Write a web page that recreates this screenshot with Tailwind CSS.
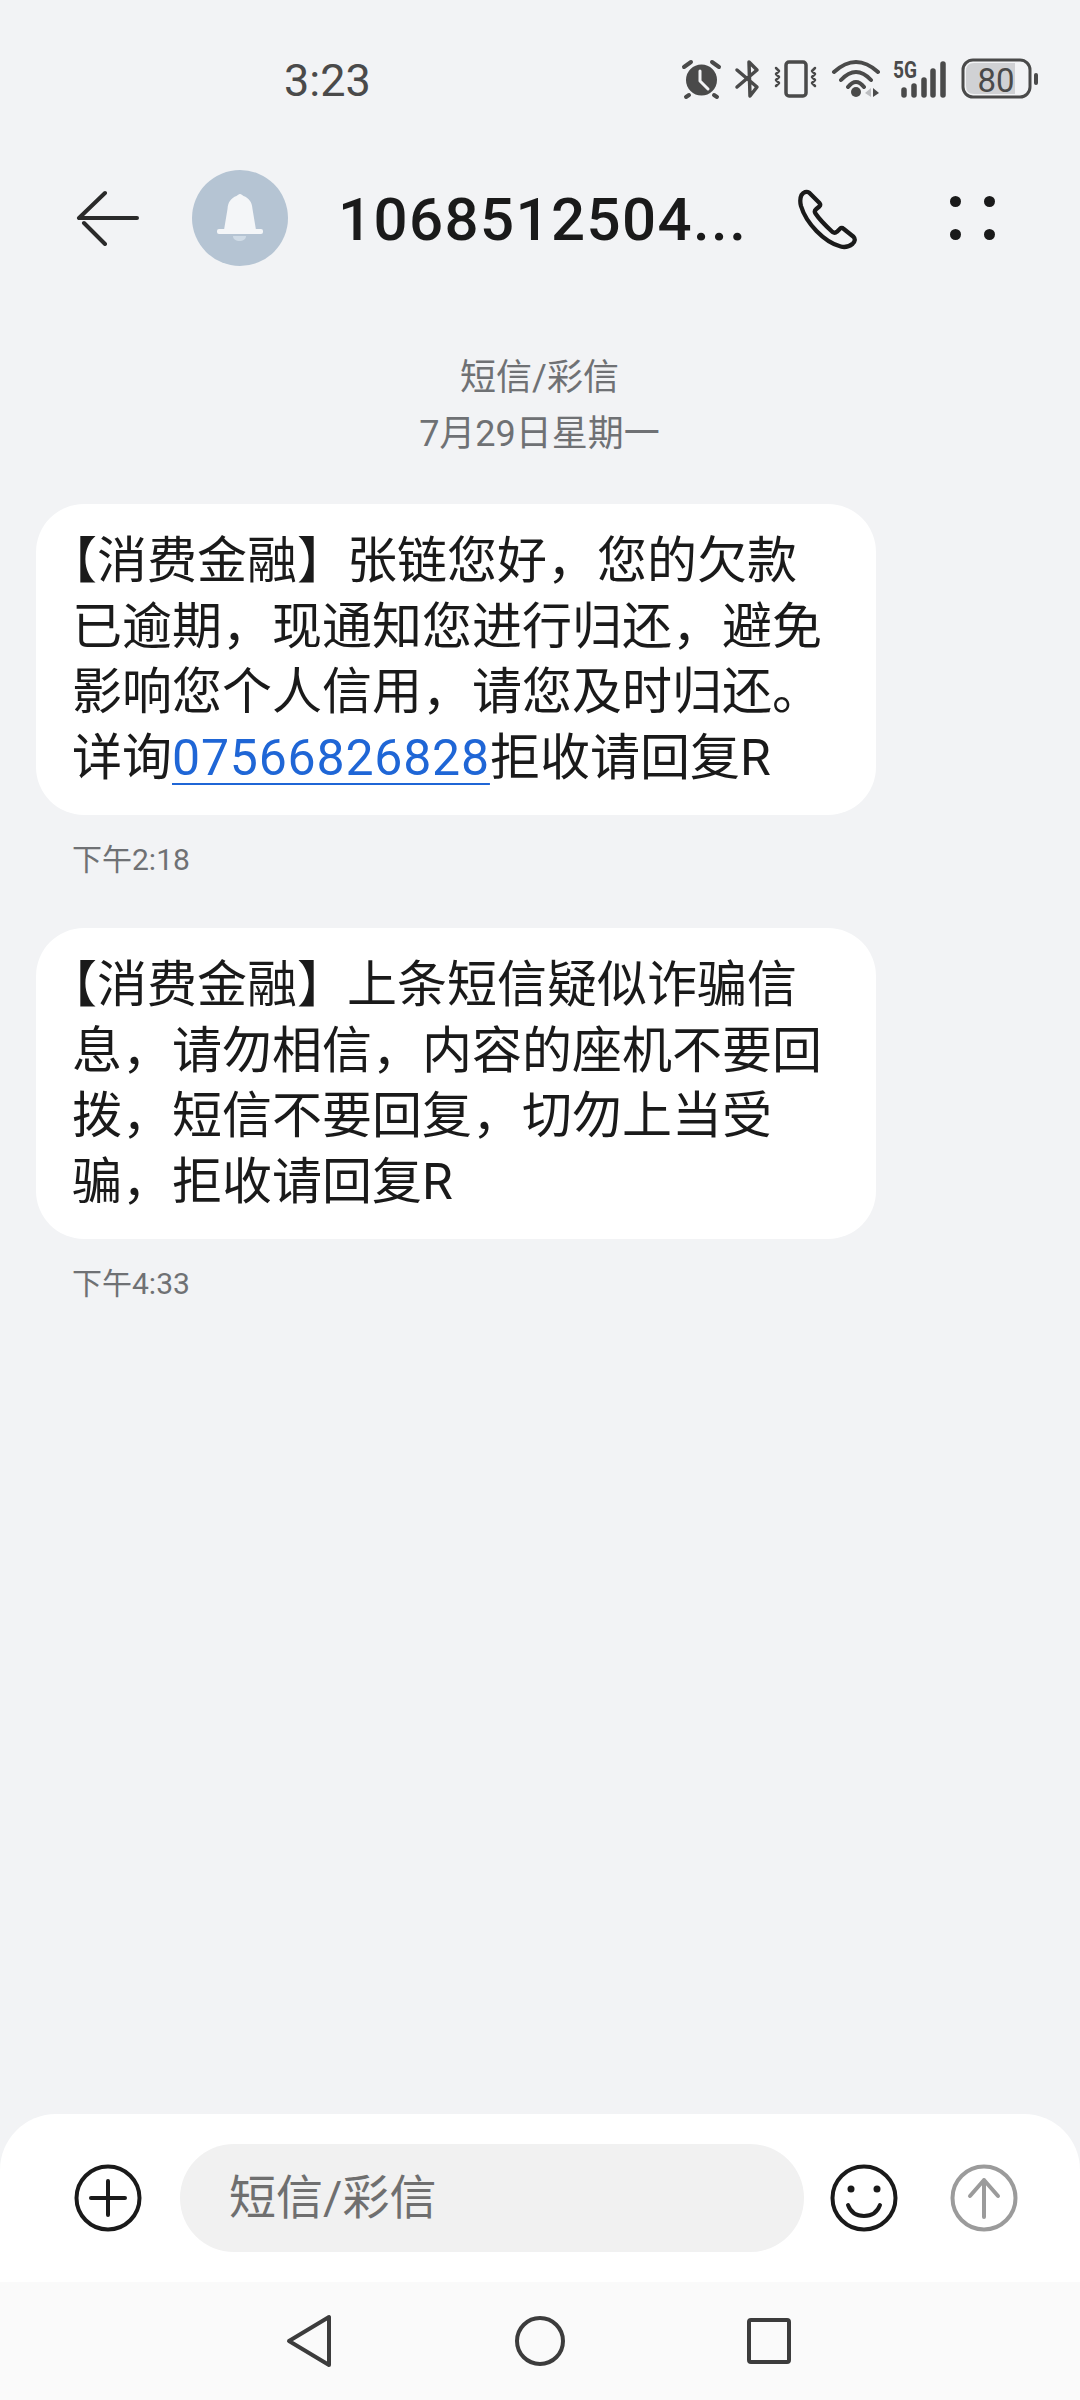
<!DOCTYPE html>
<html lang="zh-CN">
<head>
  <meta charset="UTF-8">
  <meta name="viewport" content="width=device-width, initial-scale=1.0">
  <script src="https://cdn.jsdelivr.net/npm/@tailwindcss/browser@4"></script>
  <title>短信/彩信</title>
</head>
<body class="bg-[#f2f3f5]">
  <div class="w-[1080px] h-[2400px] flex flex-col overflow-hidden font-['Roboto','Noto_Sans_CJK_SC',sans-serif] text-[#1a1a1a]">

    <!-- status bar -->
    <div class="h-[160px] shrink-0 flex items-start justify-between">
      <span class="ml-[284px] mt-[55px] text-[45px] leading-[52px] text-[#4a4a4a]">3:23</span>
      <svg class="mt-[50px] mr-[40px]" width="360" height="60" viewBox="680 50 360 60" fill="none" stroke="#4a4a4a" stroke-width="3.5" stroke-linecap="round" stroke-linejoin="round">
        <!-- alarm -->
        <circle cx="701.5" cy="80" r="15.5" fill="#4a4a4a" stroke="none"/>
        <path d="M684 67l7-5M719 67l-7-5M689 95l-3 2M714 95l3 2" stroke-width="4"/>
        <path d="M700 71v10l8 8" stroke="#f2f3f5" stroke-width="3"/>
        <!-- bluetooth -->
        <path d="M737 70l20 17-7 9-1-34 8 8-20 17" stroke-width="3.5"/>
        <!-- vibrate -->
        <rect x="786" y="62" width="20" height="34" rx="3" stroke-width="3.5"/>
        <path d="M776 68l3 3-3 3 3 3-3 3 3 3-3 3M815 68l-3 3 3 3-3 3 3 3-3 3 3 3" stroke-width="2.5"/>
        <!-- wifi -->
        <path d="M834 72q22-20 44 0M841 80q15-16 30 0M848 87q8-10 16 0" stroke-width="4"/>
        <circle cx="856" cy="92" r="5" fill="#4a4a4a" stroke="none"/>
        <path d="M871 88v9l-6-4z" fill="#bdbec1" stroke="none"/>
        <path d="M873 88v9l6-4z" fill="#4a4a4a" stroke="none"/>
        <!-- 5g + signal -->
        <text x="893" y="78" font-family="Roboto" font-weight="700" font-size="23" textLength="24" lengthAdjust="spacingAndGlyphs" fill="#4a4a4a" stroke="none">5G</text>
        <path d="M904 90v5M914 86v9M924 80v15M933 71v24M943 64v31" stroke-width="5.5"/>
        <!-- battery -->
        <rect x="963" y="60" width="67" height="37" rx="10" stroke-width="3"/>
        <path d="M974 63h41v31h-41q-8 0-8-8v-15q0-8 8-8z" fill="#d0d1d4" stroke="none"/>
        <text x="996" y="91.500" text-anchor="middle" font-family="Roboto" font-size="33" fill="#4a4a4a" stroke="none">80</text>
        <path d="M1036 75v8" stroke-width="4"/>
      </svg>
    </div>

    <!-- title bar -->
    <div class="h-[120px] shrink-0 flex items-center -mt-[2px]">
      <svg class="ml-[76px]" width="64" height="56" viewBox="0 0 64 56" fill="none" stroke="#2a2a2a" stroke-width="4" stroke-linecap="round" stroke-linejoin="round">
        <path d="M29 3L3 28h58M8 33l21 21"/>
      </svg>
      <div class="ml-[52px] w-[96px] h-[96px] rounded-full bg-[#b5c4d3] flex items-center justify-center">
        <svg width="48" height="52" viewBox="0 0 48 52" fill="#f4f6f8">
          <path d="M24 2c1.500 0 2 1 3.500 2C33 6 36 10 36.500 17L40 38H8l3.500-21C12 10 15 6 20.500 4 22 3 22.500 2 24 2z"/>
          <rect x="1" y="37" width="46" height="5" rx="2"/>
          <path d="M17 44h13c0 3.500-3 5-6.500 5S17 47.500 17 44z" fill="#cfdbe6"/>
        </svg>
      </div>
      <span class="ml-[50px] mt-[3px] text-[60px] font-medium leading-none tracking-[1.4px] w-[430px] whitespace-nowrap">1068512504...</span>
      <svg class="ml-[30px]" width="64" height="64" viewBox="0 -2 64 64" fill="none" stroke="#1a1a1a" stroke-width="4.300" stroke-linejoin="round">
        <path d="M3.500 7c2-3 5-4 7.500-2.500l10.500 10.500c.8 1 .8 2.500-.2 3.500l-3 2.500c-1.500 1.200-1.800 3-.8 4.500c4 6 11 13 17 18.500c1.500 1 3 1 4.500-.3l3-3c1-1 2.500-1 3.500 0l10 8c2 2 1.500 5-.8 7c-3.500 2.800-8 4-12 2.800C26 54 8 35 3 18c-1-4-1-8 .5-11z"/>
      </svg>
      <div class="ml-[88px] grid grid-cols-2 gap-x-[23px] gap-y-[22px]">
        <span class="w-[11px] h-[11px] rounded-full bg-[#1a1a1a]"></span>
        <span class="w-[11px] h-[11px] rounded-full bg-[#1a1a1a]"></span>
        <span class="w-[11px] h-[11px] rounded-full bg-[#1a1a1a]"></span>
        <span class="w-[11px] h-[11px] rounded-full bg-[#1a1a1a]"></span>
      </div>
    </div>

    <!-- messages -->
    <div class="flex-1 min-h-0">
      <div class="mt-[72px] -ml-[1px] text-center text-[36px] leading-[56px] text-[#6f7174]">
        <div>短信/彩信</div>
        <div>7月29日星期一</div>
      </div>

      <div class="mt-[42px] ml-[36px] w-[840px] rounded-[48px] bg-white px-[36px] pt-[25px] pb-[24px] text-[50px] leading-[65.5px]">
        <span class="-ml-[25px]">【消费金融】张链您好，您的欠款</span><br>
        已逾期，现通知您进行归还，避免<br>
        影响您个人信用，请您及时归还。<br>
        详询<span class="text-[#1f66d6] tracking-[0.8px] underline decoration-2 underline-offset-[8px]">07566826828</span>拒收请回复R
      </div>
      <div class="mt-[25px] ml-[72px] text-[30px] leading-[40px] text-[#6f7174]">下午2:18</div>

      <div class="mt-[48px] ml-[36px] w-[840px] rounded-[48px] bg-white px-[36px] pt-[25px] pb-[24px] text-[50px] leading-[65.5px]">
        <span class="-ml-[25px]">【消费金融】上条短信疑似诈骗信</span><br>
        息，请勿相信，内容的座机不要回<br>
        拨，短信不要回复，切勿上当受<br>
        骗，拒收请回复R
      </div>
      <div class="mt-[25px] ml-[72px] text-[30px] leading-[40px] text-[#6f7174]">下午4:33</div>
    </div>

    <!-- input bar -->
    <div class="h-[168px] shrink-0 bg-white rounded-t-[56px] flex items-center">
      <svg class="ml-[74px]" width="68" height="68" viewBox="0 0 68 68" fill="none" stroke="#1a1a1a" stroke-width="4" stroke-linecap="round">
        <circle cx="34" cy="34" r="31.500"/>
        <path d="M34 17v34M17 34h34"/>
      </svg>
      <div class="ml-[38px] w-[624px] h-[108px] rounded-full bg-[#f1f1f1] flex items-center pl-[49px] text-[47px] text-[#6f6f6f]">短信/彩信</div>
      <svg class="ml-[26px]" width="68" height="68" viewBox="0 0 68 68" fill="none" stroke="#1a1a1a" stroke-width="4" stroke-linecap="round">
        <circle cx="34" cy="34" r="31.500"/>
        <circle cx="21" cy="25" r="3.500" fill="#1a1a1a" stroke="none"/>
        <circle cx="47" cy="25" r="3.500" fill="#1a1a1a" stroke="none"/>
        <path d="M18 41c3 8 9 11 16 11s13-3 16-11"/>
      </svg>
      <svg class="ml-[52px]" width="68" height="68" viewBox="0 0 68 68" fill="none" stroke="#9b9b9b" stroke-width="4" stroke-linecap="round" stroke-linejoin="round">
        <circle cx="34" cy="34" r="31.500"/>
        <path d="M34 53V16M20 32l14-16 14 16"/>
      </svg>
    </div>

    <!-- nav bar -->
    <div class="h-[118px] shrink-0 bg-[#fafafa] flex items-center pb-[1px]">
      <svg class="ml-[286px]" width="46" height="54" viewBox="0 0 46 54" fill="none" stroke="#3c3c3c" stroke-width="4" stroke-linejoin="round">
        <path d="M43 3v48L3 27z"/>
      </svg>
      <svg class="ml-[182px]" width="52" height="52" viewBox="0 0 52 52" fill="none" stroke="#3c3c3c" stroke-width="4">
        <circle cx="26" cy="26" r="23"/>
      </svg>
      <svg class="ml-[180px]" width="46" height="48" viewBox="0 0 46 48" fill="none" stroke="#3c3c3c" stroke-width="4" stroke-linejoin="round">
        <rect x="3" y="3" width="40" height="42" rx="2"/>
      </svg>
    </div>
  </div>
</body>
</html>
